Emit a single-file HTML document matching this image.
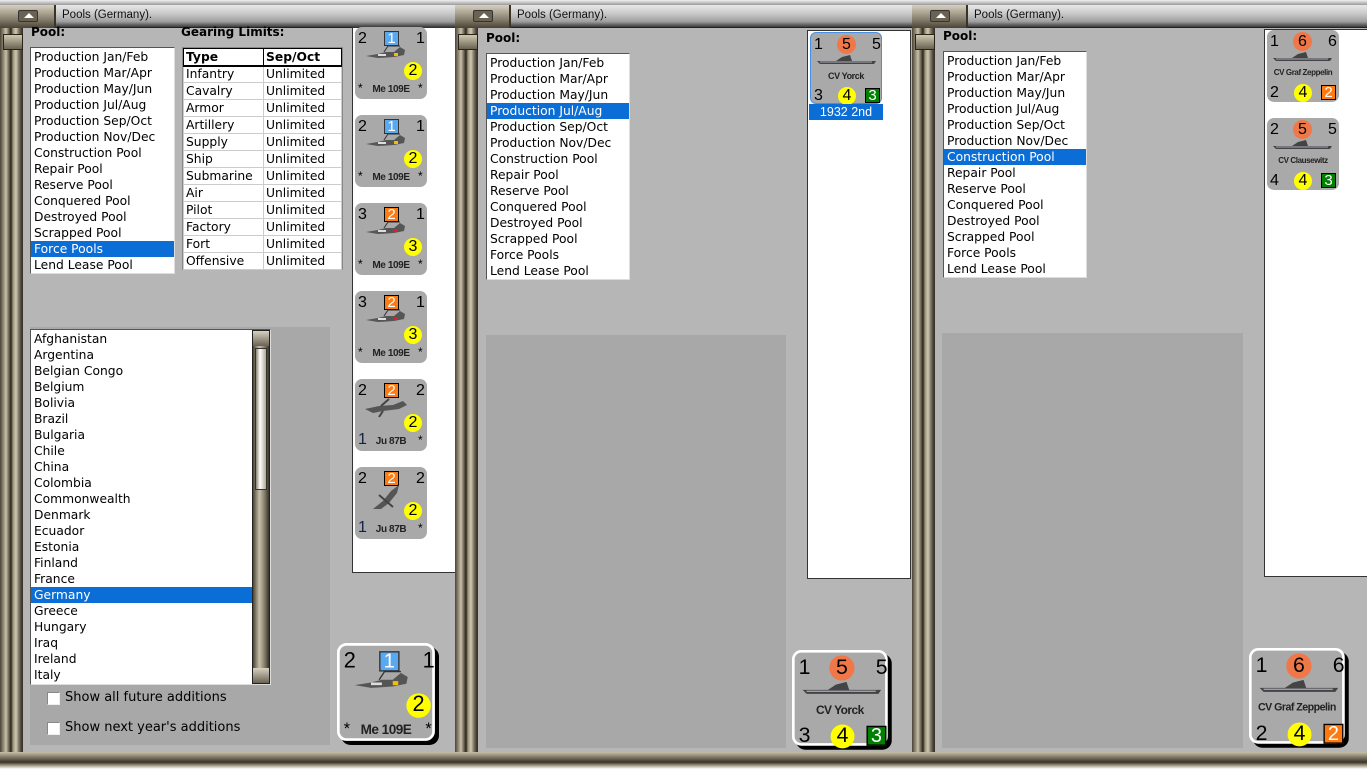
<!DOCTYPE html>
<html><head><meta charset="utf-8"><style>
*{margin:0;padding:0;box-sizing:border-box}
body{width:1367px;height:769px;overflow:hidden;background:#b6b6b6;position:relative;font-family:"DejaVu Sans","Liberation Sans",sans-serif;font-size:12px;color:#000}
.a{position:absolute}
.bg{background:#b6b6b6}
.top{background:linear-gradient(#f0f0f0,#9a9a9a);height:5px;top:0}
.title{top:5px;height:23px;background:linear-gradient(#e8e8e8 0%,#c8c8c8 40%,#a0a0a0 75%,#3a3a3a 100%);border-bottom:1px solid #222}
.title span{position:absolute;left:62px;top:4px;font-family:"Liberation Sans",sans-serif;font-size:11.5px;color:#111}
.tbtn{top:5px;width:56px;height:23px;background:linear-gradient(#d8d0c0,#8a8270 60%,#4a4436);border-right:2px solid #3a3428}
.tbtn i{position:absolute;left:18px;top:5px;width:20px;height:12px;background:#6a6252;border:1px solid #333;border-radius:2px}
.tbtn i:after{content:"";position:absolute;left:5px;top:2px;border:5px solid transparent;border-bottom:5px solid #fff;border-top:0}
.frame{background:linear-gradient(90deg,#4a4436 0,#8a8270 3px,#c8c0a8 6px,#6a6252 9px,#2a2418 11px,#9a927c 13px,#d0c8b0 16px,#7a7262 19px,#3a3428 22px);top:28px;width:23px;bottom:17px}
.frame:before{content:"";position:absolute;left:3px;top:6px;width:18px;height:14px;background:linear-gradient(#d0c8b0,#6a6252);border:1px solid #2a2418}
.bot{bottom:0;height:17px;background:linear-gradient(#c8c0a8,#6a6252 40%,#3a3428 60%,#a8a08c 80%,#ffffff)}
.lbl{font-weight:bold;font-size:12px}
.list{background:#fff;border:1px solid #555;border-right-color:#ddd;border-bottom-color:#ddd}
.list div{height:16px;line-height:16px;padding-left:3px;white-space:nowrap;font-size:12.3px;color:#000}
.list div.sel{background:#0a6ed6;color:#fff}
.gray{background:#a8a8a8}
.white{background:#fff;border:1px solid #333}
table{border-collapse:collapse;font-size:12.3px}
td{border:1px solid #ccc;height:17px;padding:0 2px;line-height:15px}
th{border:1px solid #000;border-bottom:2px solid #000;text-align:left;padding:0 2px;height:17px;font-size:12.3px}
.c{position:absolute;width:72px;height:72px;background:#a9a9a9;border-radius:7px;font-family:"Liberation Sans",sans-serif;transform-origin:0 0}
.c .n{position:absolute;font-size:16px;line-height:16px}
.c .nm{position:absolute;left:0;width:100%;text-align:center;font-weight:bold;font-size:10px;color:#222;letter-spacing:-.4px}
.c .y{position:absolute;width:18px;height:18px;border-radius:50%;background:#ffff00;text-align:center;font-size:16px;line-height:18px}
.c .o{position:absolute;width:19px;height:19px;border-radius:50%;background:#f07848;text-align:center;font-size:16px;line-height:19px}
.c .bl{position:absolute;width:15px;height:15px;background:#5aa8f0;color:#fff;text-align:center;font-size:15px;line-height:14px;border:1px solid #333}
.c .or{position:absolute;width:15px;height:15px;background:#ff7a10;color:#fff;text-align:center;font-size:15px;line-height:14px;border:1px solid #000}
.c .gr{position:absolute;width:15px;height:15px;background:#008000;color:#fff;text-align:center;font-size:15px;line-height:14px;border:1px solid #000}
.big{border:2px solid #fff;box-shadow:3px 3px 0 #000}
.cb{position:absolute;width:13px;height:13px;background:#fff;border:1px solid #888;border-right-color:#eee;border-bottom-color:#eee}
</style></head><body>

<!-- WINDOW 1 -->
<div class="a top" style="left:0;width:1367px"></div>
<div class="a title" style="left:0;width:455px"><span>Pools (Germany).</span></div>
<div class="a tbtn" style="left:0"><i></i></div>
<div class="a frame" style="left:0"></div>
<div class="a bot" style="left:0;width:455px"></div>

<div class="a lbl" style="left:31px;top:25px">Pool:</div>
<div class="a list" style="left:30px;top:47px;width:145px;height:227px;padding-top:1px">
<div>Production Jan/Feb</div><div>Production Mar/Apr</div><div>Production May/Jun</div><div>Production Jul/Aug</div><div>Production Sep/Oct</div><div>Production Nov/Dec</div><div>Construction Pool</div><div>Repair Pool</div><div>Reserve Pool</div><div>Conquered Pool</div><div>Destroyed Pool</div><div>Scrapped Pool</div><div class="sel">Force Pools</div><div>Lend Lease Pool</div></div>

<div class="a lbl" style="left:181px;top:25px">Gearing Limits:</div>
<div class="a" style="left:182px;top:47px;width:161px;height:223px;background:#fff;border:1px solid #888">
<table style="width:159px"><tr><th style="width:80px">Type</th><th>Sep/Oct</th></tr>
<tr><td>Infantry</td><td>Unlimited</td></tr><tr><td>Cavalry</td><td>Unlimited</td></tr><tr><td>Armor</td><td>Unlimited</td></tr><tr><td>Artillery</td><td>Unlimited</td></tr><tr><td>Supply</td><td>Unlimited</td></tr><tr><td>Ship</td><td>Unlimited</td></tr><tr><td>Submarine</td><td>Unlimited</td></tr><tr><td>Air</td><td>Unlimited</td></tr><tr><td>Pilot</td><td>Unlimited</td></tr><tr><td>Factory</td><td>Unlimited</td></tr><tr><td>Fort</td><td>Unlimited</td></tr><tr><td>Offensive</td><td>Unlimited</td></tr></table></div>

<div class="a white" style="left:352px;top:27px;width:104px;height:546px"></div>

<div class="a gray" style="left:30px;top:327px;width:300px;height:418px"></div>
<div class="a list" style="left:30px;top:329px;width:241px;height:356px;padding-top:1px;overflow:hidden">
<div>Afghanistan</div><div>Argentina</div><div>Belgian Congo</div><div>Belgium</div><div>Bolivia</div><div>Brazil</div><div>Bulgaria</div><div>Chile</div><div>China</div><div>Colombia</div><div>Commonwealth</div><div>Denmark</div><div>Ecuador</div><div>Estonia</div><div>Finland</div><div>France</div><div class="sel" style="margin-right:18px">Germany</div><div>Greece</div><div>Hungary</div><div>Iraq</div><div>Ireland</div><div>Italy</div></div>
<div class="a" style="left:252px;top:330px;width:18px;height:354px;background:linear-gradient(90deg,#4a4436,#c8c0a8 40%,#8a8270 70%,#3a3428);border:1px solid #222"></div>
<div class="a" style="left:253px;top:331px;width:16px;height:15px;background:linear-gradient(#d8d0c0,#6a6252)"></div>
<div class="a" style="left:253px;top:668px;width:16px;height:15px;background:linear-gradient(#d8d0c0,#6a6252)"></div>
<div class="a" style="left:255px;top:348px;width:12px;height:142px;background:linear-gradient(90deg,#8a8270,#fff 40%,#b0a890);border:1px solid #333"></div>
<div class="cb" style="left:47px;top:692px"></div><div class="a" style="left:65px;top:690px;font-size:13px">Show all future additions</div>
<div class="cb" style="left:47px;top:722px"></div><div class="a" style="left:65px;top:720px;font-size:13px">Show next year's additions</div>

<!-- aircraft counters -->
<div class="c" style="left:355px;top:27px"><span class="n" style="left:3px;top:4px">2</span><span class="bl" style="left:29px;top:4px">1</span><span class="n" style="left:61px;top:4px">1</span>
<svg class="a" style="left:9px;top:17px" width="44" height="18"><path d="M2 12 L14 10 L22 8 L30 8 L36 3 L41 6 L40 11 L30 13 L14 14 Z" fill="#555"/><path d="M14 11 L22 11" stroke="#ddd" stroke-width="2"/><rect x="30" y="9" width="4" height="3" fill="#f0c000"/><path d="M20 8 L24 2 L36 2" stroke="#333" fill="none"/></svg>
<span class="y" style="left:49px;top:35px">2</span><span class="n" style="left:3px;top:53px;font-size:12px">*</span><span class="nm" style="top:57px">Me 109E</span><span class="n" style="left:63px;top:53px;font-size:12px">*</span></div>
<div class="c" style="left:355px;top:115px"><span class="n" style="left:3px;top:4px">2</span><span class="bl" style="left:29px;top:4px">1</span><span class="n" style="left:61px;top:4px">1</span>
<svg class="a" style="left:9px;top:17px" width="44" height="18"><path d="M2 12 L14 10 L22 8 L30 8 L36 3 L41 6 L40 11 L30 13 L14 14 Z" fill="#555"/><path d="M14 11 L22 11" stroke="#ddd" stroke-width="2"/><rect x="30" y="9" width="4" height="3" fill="#f0c000"/><path d="M20 8 L24 2 L36 2" stroke="#333" fill="none"/></svg>
<span class="y" style="left:49px;top:35px">2</span><span class="n" style="left:3px;top:53px;font-size:12px">*</span><span class="nm" style="top:57px">Me 109E</span><span class="n" style="left:63px;top:53px;font-size:12px">*</span></div>
<div class="c" style="left:355px;top:203px"><span class="n" style="left:3px;top:4px">3</span><span class="or" style="left:29px;top:4px">2</span><span class="n" style="left:61px;top:4px">1</span>
<svg class="a" style="left:9px;top:17px" width="44" height="18"><path d="M2 12 L14 10 L22 8 L30 8 L36 3 L41 6 L40 11 L30 13 L14 14 Z" fill="#555"/><path d="M14 11 L22 11" stroke="#ddd" stroke-width="2"/><rect x="30" y="9" width="4" height="3" fill="#e02020"/><path d="M20 8 L24 2 L36 2" stroke="#333" fill="none"/></svg>
<span class="y" style="left:49px;top:35px">3</span><span class="n" style="left:3px;top:53px;font-size:12px">*</span><span class="nm" style="top:57px">Me 109E</span><span class="n" style="left:63px;top:53px;font-size:12px">*</span></div>
<div class="c" style="left:355px;top:291px"><span class="n" style="left:3px;top:4px">3</span><span class="or" style="left:29px;top:4px">2</span><span class="n" style="left:61px;top:4px">1</span>
<svg class="a" style="left:9px;top:17px" width="44" height="18"><path d="M2 12 L14 10 L22 8 L30 8 L36 3 L41 6 L40 11 L30 13 L14 14 Z" fill="#555"/><path d="M14 11 L22 11" stroke="#ddd" stroke-width="2"/><rect x="30" y="9" width="4" height="3" fill="#e02020"/><path d="M20 8 L24 2 L36 2" stroke="#333" fill="none"/></svg>
<span class="y" style="left:49px;top:35px">3</span><span class="n" style="left:3px;top:53px;font-size:12px">*</span><span class="nm" style="top:57px">Me 109E</span><span class="n" style="left:63px;top:53px;font-size:12px">*</span></div>
<div class="c" style="left:355px;top:379px"><span class="n" style="left:3px;top:4px">2</span><span class="or" style="left:29px;top:4px">2</span><span class="n" style="left:61px;top:4px">2</span>
<svg class="a" style="left:8px;top:18px" width="46" height="22"><path d="M2 12 L16 9 L30 8 L40 4 L44 8 L36 12 L20 14 L10 16 Z" fill="#555"/><path d="M18 9 L26 2 M20 14 L16 20" stroke="#444" stroke-width="2"/></svg>
<span class="y" style="left:49px;top:35px">2</span><span class="n" style="left:3px;top:53px;color:#124">1</span><span class="nm" style="top:57px">Ju 87B</span><span class="n" style="left:63px;top:53px;font-size:12px">*</span></div>
<div class="c" style="left:355px;top:467px"><span class="n" style="left:3px;top:4px">2</span><span class="or" style="left:29px;top:4px">2</span><span class="n" style="left:61px;top:4px">2</span>
<svg class="a" style="left:14px;top:16px" width="36" height="30"><path d="M4 26 L14 18 L22 8 L30 2 L28 10 L20 20 L12 26 Z" fill="#555"/><path d="M10 12 L24 24" stroke="#444" stroke-width="2"/></svg>
<span class="y" style="left:49px;top:35px">2</span><span class="n" style="left:3px;top:53px;color:#124">1</span><span class="nm" style="top:57px">Ju 87B</span><span class="n" style="left:63px;top:53px;font-size:12px">*</span></div>

<div class="c big" style="left:337px;top:643px;transform:scale(1.36)"><span class="n" style="left:3px;top:4px">2</span><span class="bl" style="left:29px;top:4px">1</span><span class="n" style="left:61px;top:4px">1</span>
<svg class="a" style="left:9px;top:17px" width="44" height="18"><path d="M2 12 L14 10 L22 8 L30 8 L36 3 L41 6 L40 11 L30 13 L14 14 Z" fill="#555"/><path d="M14 11 L22 11" stroke="#ddd" stroke-width="2"/><rect x="30" y="9" width="4" height="3" fill="#f0c000"/><path d="M20 8 L24 2 L36 2" stroke="#333" fill="none"/></svg>
<span class="y" style="left:49px;top:35px">2</span><span class="n" style="left:3px;top:53px;font-size:12px">*</span><span class="nm" style="top:57px">Me 109E</span><span class="n" style="left:63px;top:53px;font-size:12px">*</span></div>

<!-- WINDOW 2 -->
<div class="a bg" style="left:455px;top:28px;width:457px;height:724px"></div>
<div class="a title" style="left:455px;width:457px"><span>Pools (Germany).</span></div>
<div class="a tbtn" style="left:455px"><i></i></div>
<div class="a frame" style="left:455px"></div>
<div class="a bot" style="left:455px;width:457px"></div>
<div class="a lbl" style="left:486px;top:31px">Pool:</div>
<div class="a list" style="left:486px;top:53px;width:144px;height:227px;padding-top:1px">
<div>Production Jan/Feb</div><div>Production Mar/Apr</div><div>Production May/Jun</div><div class="sel">Production Jul/Aug</div><div>Production Sep/Oct</div><div>Production Nov/Dec</div><div>Construction Pool</div><div>Repair Pool</div><div>Reserve Pool</div><div>Conquered Pool</div><div>Destroyed Pool</div><div>Scrapped Pool</div><div>Force Pools</div><div>Lend Lease Pool</div></div>
<div class="a gray" style="left:486px;top:335px;width:300px;height:413px"></div>
<div class="a white" style="left:807px;top:30px;width:104px;height:549px"></div>
<div class="c" style="left:810px;top:32px;border:1px solid #4a90e0;border-radius:6px"><span class="n" style="left:3px;top:4px">1</span><span class="o" style="left:26px;top:2px">5</span><span class="n" style="left:61px;top:4px">5</span>
<svg class="a" style="left:5px;top:22px" width="62" height="10"><path d="M1 6 L60 6 L58 9 L4 9 Z M20 6 L26 2 L34 0 L36 6 Z" fill="#444"/><path d="M4 7 L56 7" stroke="#aab" stroke-width="1"/></svg>
<span class="nm" style="top:38px;font-size:9px">CV Yorck</span><span class="n" style="left:3px;top:55px">3</span><span class="y" style="left:27px;top:54px">4</span><span class="gr" style="left:54px;top:55px">3</span></div>
<div class="a" style="left:809px;top:104px;width:74px;height:16px;background:#0a6ed6;color:#fff;font-family:'Liberation Sans',sans-serif;font-size:12.5px;text-align:center;line-height:16px">1932 2nd</div>
<div class="c big" style="left:792px;top:650px;transform:scale(1.33)"><span class="n" style="left:3px;top:4px">1</span><span class="o" style="left:26px;top:2px">5</span><span class="n" style="left:61px;top:4px">5</span>
<svg class="a" style="left:5px;top:22px" width="62" height="10"><path d="M1 6 L60 6 L58 9 L4 9 Z M20 6 L26 2 L34 0 L36 6 Z" fill="#444"/><path d="M4 7 L56 7" stroke="#aab" stroke-width="1"/></svg>
<span class="nm" style="top:38px;font-size:9px">CV Yorck</span><span class="n" style="left:3px;top:55px">3</span><span class="y" style="left:27px;top:54px">4</span><span class="gr" style="left:54px;top:55px">3</span></div>

<!-- WINDOW 3 -->
<div class="a bg" style="left:912px;top:28px;width:455px;height:724px"></div>
<div class="a title" style="left:912px;width:455px"><span>Pools (Germany).</span></div>
<div class="a tbtn" style="left:912px"><i></i></div>
<div class="a frame" style="left:912px"></div>
<div class="a bot" style="left:912px;width:455px"></div>
<div class="a lbl" style="left:943px;top:29px">Pool:</div>
<div class="a list" style="left:943px;top:51px;width:144px;height:227px;padding-top:1px">
<div>Production Jan/Feb</div><div>Production Mar/Apr</div><div>Production May/Jun</div><div>Production Jul/Aug</div><div>Production Sep/Oct</div><div>Production Nov/Dec</div><div class="sel">Construction Pool</div><div>Repair Pool</div><div>Reserve Pool</div><div>Conquered Pool</div><div>Destroyed Pool</div><div>Scrapped Pool</div><div>Force Pools</div><div>Lend Lease Pool</div></div>
<div class="a gray" style="left:942px;top:333px;width:301px;height:415px"></div>
<div class="a white" style="left:1264px;top:29px;width:104px;height:548px"></div>
<div class="c" style="left:1267px;top:30px"><span class="n" style="left:3px;top:4px">1</span><span class="o" style="left:26px;top:2px">6</span><span class="n" style="left:61px;top:4px">6</span>
<svg class="a" style="left:5px;top:22px" width="62" height="10"><path d="M1 6 L60 6 L58 9 L4 9 Z M20 6 L26 2 L34 0 L36 6 Z" fill="#444"/><path d="M4 7 L56 7" stroke="#aab" stroke-width="1"/></svg>
<span class="nm" style="top:38px;font-size:8px">CV Graf Zeppelin</span><span class="n" style="left:3px;top:55px">2</span><span class="y" style="left:27px;top:54px">4</span><span class="or" style="left:54px;top:55px">2</span></div>
<div class="c" style="left:1267px;top:118px"><span class="n" style="left:3px;top:4px">2</span><span class="o" style="left:26px;top:2px">5</span><span class="n" style="left:61px;top:4px">5</span>
<svg class="a" style="left:5px;top:22px" width="62" height="10"><path d="M1 6 L60 6 L58 9 L4 9 Z M20 6 L26 2 L34 0 L36 6 Z" fill="#444"/><path d="M4 7 L56 7" stroke="#aab" stroke-width="1"/></svg>
<span class="nm" style="top:38px;font-size:8px">CV Clausewitz</span><span class="n" style="left:3px;top:55px">4</span><span class="y" style="left:27px;top:54px">4</span><span class="gr" style="left:54px;top:55px">3</span></div>
<div class="c big" style="left:1249px;top:648px;transform:scale(1.33)"><span class="n" style="left:3px;top:4px">1</span><span class="o" style="left:26px;top:2px">6</span><span class="n" style="left:61px;top:4px">6</span>
<svg class="a" style="left:5px;top:22px" width="62" height="10"><path d="M1 6 L60 6 L58 9 L4 9 Z M20 6 L26 2 L34 0 L36 6 Z" fill="#444"/><path d="M4 7 L56 7" stroke="#aab" stroke-width="1"/></svg>
<span class="nm" style="top:38px;font-size:8px">CV Graf Zeppelin</span><span class="n" style="left:3px;top:55px">2</span><span class="y" style="left:27px;top:54px">4</span><span class="or" style="left:54px;top:55px">2</span></div>

</body></html>
